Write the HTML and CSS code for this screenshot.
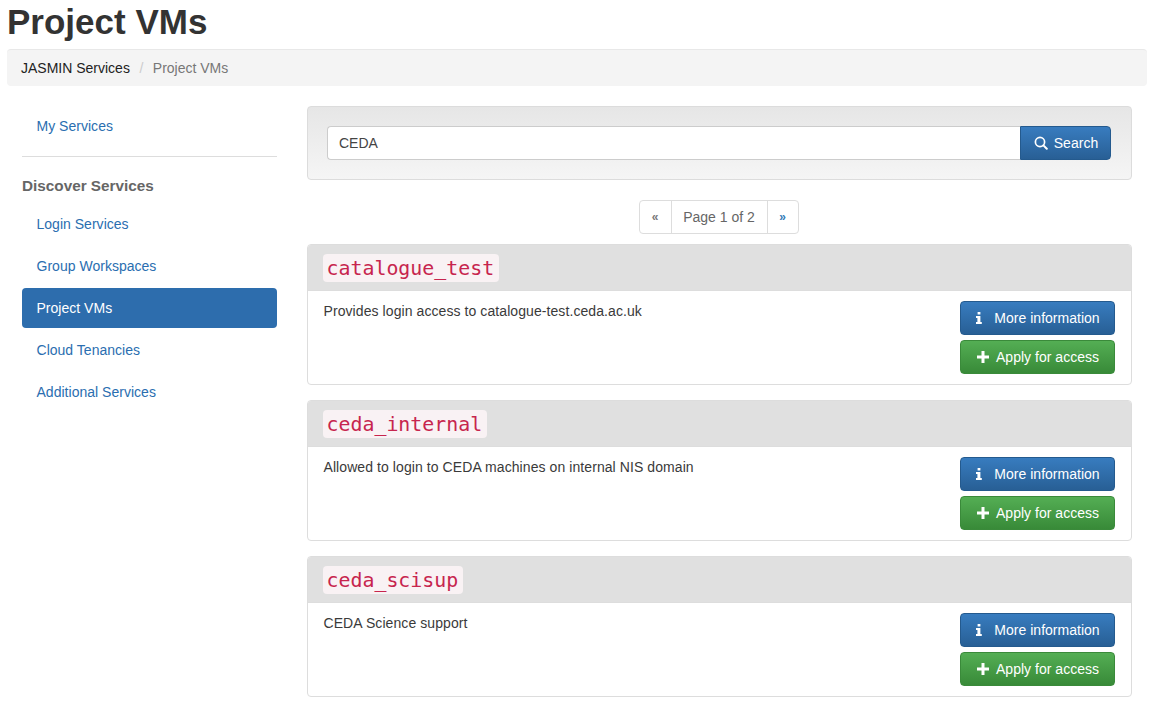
FILE: index.html
```html
<!DOCTYPE html>
<html lang="en">
<head>
<meta charset="utf-8">
<title>Project VMs</title>
<link rel="stylesheet" href="styles.css">
</head>
<body>
<div class="page">
  <h1 class="title">Project VMs</h1>
  <ol class="breadcrumb">
    <li><a href="#">JASMIN Services</a></li>
    <li class="sep">/</li>
    <li class="current">Project VMs</li>
  </ol>
  <div class="layout">
    <nav class="sidebar">
      <a class="nav-item" href="#">My Services</a>
      <hr class="divider">
      <div class="nav-heading">Discover Services</div>
      <a class="nav-item" href="#">Login Services</a>
      <a class="nav-item" href="#">Group Workspaces</a>
      <a class="nav-item active" href="#">Project VMs</a>
      <a class="nav-item" href="#">Cloud Tenancies</a>
      <a class="nav-item" href="#">Additional Services</a>
    </nav>
    <main class="main">
      <form class="well">
        <input class="search-input" type="text" value="CEDA">
        <button class="btn btn-blue btn-search" type="button">
          <svg class="icon-search" viewBox="0 0 14 14" width="14" height="14"><circle cx="6" cy="6" r="4.6" fill="none" stroke="#fff" stroke-width="1.7"/><path d="M9.4 9.4L12.8 12.8" stroke="#fff" stroke-width="2" stroke-linecap="round"/></svg>
          Search
        </button>
      </form>
      <div class="pager-row">
        <div class="pager">
          <span class="pager-cell pager-prev">«</span>
          <span class="pager-cell pager-mid">Page 1 of 2</span>
          <a class="pager-cell pager-next" href="#">»</a>
        </div>
      </div>
      <section class="panel">
        <header class="panel-head"><code class="code">catalogue_test</code></header>
        <div class="panel-body">
          <p class="desc">Provides login access to catalogue-test.ceda.ac.uk</p>
          <div class="actions">
            <a class="btn btn-blue" href="#"><svg class="icon-info" viewBox="0 0 8 12" width="8" height="12"><path d="M2.6 0h2.8v2.4H2.6zM1 3.9h4.4v6h1.4V12H1V9.9h1.4V6H1z" fill="#fff"/></svg>More information</a>
            <a class="btn btn-green" href="#"><svg class="icon-plus" viewBox="0 0 12 12" width="12" height="12"><path d="M4.5 0h3v4.5H12v3H7.500V12h-3V7.500H0v-3h4.500z" fill="#fff"/></svg>Apply for access</a>
          </div>
        </div>
      </section>
      <section class="panel">
        <header class="panel-head"><code class="code">ceda_internal</code></header>
        <div class="panel-body">
          <p class="desc">Allowed to login to CEDA machines on internal NIS domain</p>
          <div class="actions">
            <a class="btn btn-blue" href="#"><svg class="icon-info" viewBox="0 0 8 12" width="8" height="12"><path d="M2.6 0h2.8v2.4H2.6zM1 3.9h4.4v6h1.4V12H1V9.9h1.4V6H1z" fill="#fff"/></svg>More information</a>
            <a class="btn btn-green" href="#"><svg class="icon-plus" viewBox="0 0 12 12" width="12" height="12"><path d="M4.5 0h3v4.5H12v3H7.500V12h-3V7.500H0v-3h4.500z" fill="#fff"/></svg>Apply for access</a>
          </div>
        </div>
      </section>
      <section class="panel">
        <header class="panel-head"><code class="code">ceda_scisup</code></header>
        <div class="panel-body">
          <p class="desc">CEDA Science support</p>
          <div class="actions">
            <a class="btn btn-blue" href="#"><svg class="icon-info" viewBox="0 0 8 12" width="8" height="12"><path d="M2.6 0h2.8v2.4H2.6zM1 3.9h4.4v6h1.4V12H1V9.9h1.4V6H1z" fill="#fff"/></svg>More information</a>
            <a class="btn btn-green" href="#"><svg class="icon-plus" viewBox="0 0 12 12" width="12" height="12"><path d="M4.5 0h3v4.5H12v3H7.500V12h-3V7.500H0v-3h4.500z" fill="#fff"/></svg>Apply for access</a>
          </div>
        </div>
      </section>
    </main>
  </div>
</div>
</body>
</html>
```
FILE: styles.css
```css
* { box-sizing: border-box; }
html, body { margin: 0; padding: 0; background: #fff; }
body {
  font-family: "Liberation Sans", Arial, sans-serif;
  font-size: 14px;
  line-height: 20px;
  color: #333;
  overflow: hidden;
}
a { text-decoration: none; }
.page { padding: 2px 22px 0 7px; }
.title {
  margin: 0 0 7px;
  font-size: 35px;
  line-height: 40px;
  font-weight: 700;
  color: #333;
}
.breadcrumb {
  display: flex;
  gap: 9.5px;
  list-style: none;
  margin: 0 0 20px;
  padding: 8px 15px 8px 14px;
  height: 37px;
  background: #f4f4f4;
  border-top: 1px solid #e8e8e8;
  border-radius: 4px;
  color: #777;
}
.breadcrumb a { color: #222; }
.breadcrumb .sep { color: #ccc; }
.layout { display: flex; align-items: flex-start; gap: 30px; padding-left: 15px; }
.sidebar { width: 255px; flex: none; display: flex; flex-direction: column; }
.nav-item {
  display: block;
  height: 40px;
  margin-bottom: 2px;
  padding: 10px 14.5px;
  letter-spacing: 0.02px;
  color: #2a6eb0;
  border-radius: 4px;
}
.nav-item.active { background: #2d6dad; color: #fff; }
.divider { width: 100%; height: 1px; border: 0; background: #ddd; margin: 8px 0 19px; }
.nav-heading {
  font-size: 15.3px;
  line-height: 20px;
  font-weight: 700;
  color: #666;
  margin-bottom: 8px;
}
.main { width: 825px; flex: none; }
.well {
  display: flex;
  height: 74px;
  padding: 19px 20px 19px 19px;
  background: linear-gradient(to bottom, #e6e6e6, #f5f5f5);
  border: 1px solid #dcdcdc;
  border-radius: 4px;
  margin-bottom: 20px;
}
.search-input {
  flex: 1;
  min-width: 0;
  height: 34px;
  padding: 6px 11px;
  font: 14px/20px "Liberation Sans", Arial, sans-serif;
  color: #444;
  background: #fff;
  border: 1px solid #ccc;
  border-right: 0;
  border-radius: 4px 0 0 4px;
  outline: 0;
}
.btn {
  display: flex;
  align-items: center;
  justify-content: center;
  width: 155px;
  height: 34px;
  padding-left: 0;
  color: #fff;
  font: 14px/20px "Liberation Sans", Arial, sans-serif;
  letter-spacing: 0.02px;
  border-radius: 4px;
  border: 1px solid;
}
.btn-blue {
  background: linear-gradient(to bottom, #387cbf, #285f95);
  border-color: #245a8e;
}
.btn-green {
  background: linear-gradient(to bottom, #54ae54, #388a38);
  border-color: #3a8a3a;
  padding-left: 1px;
}
.btn-search {
  width: 91px;
  flex: none;
  border-radius: 0 4px 4px 0;
  padding: 0 0 0 1px;
}
.icon-search { margin-right: 6px; }
.icon-info { margin-right: 11px; }
.icon-plus { margin-right: 7px; }
.pager-row { display: flex; justify-content: center; margin: 0 1px 10px 0; padding-right: 1px; }
.pager {
  display: flex;
  height: 34px;
  border: 1px solid #ddd;
  border-radius: 4px;
  background: #fff;
}
.pager-cell {
  display: flex;
  align-items: center;
  justify-content: center;
  padding: 0 12px;
  color: #777;
}
.pager-prev { width: 31px; padding: 0; font-size: 12px; font-weight: 700; }
.pager-mid { width: 97px; padding: 0; border-left: 1px solid #ddd; border-right: 1px solid #ddd; color: #666; }
.pager-next { width: 30px; padding: 0; color: #337ab7; font-size: 12px; font-weight: 700; }
.panel {
  height: 141px;
  margin-bottom: 15px;
  border: 1px solid #ddd;
  border-radius: 4px;
  overflow: hidden;
  background: #fff;
}
.panel-head {
  display: flex;
  align-items: center;
  height: 46px;
  padding: 0 15px;
  background: #e0e0e0;
  border-bottom: 1px solid #ddd;
}
.code {
  display: block;
  padding: 3px 5px 1px 3.5px;
  height: 28px;
  font-family: "DejaVu Sans Mono", monospace;
  font-size: 19.9px;
  line-height: 24px;
  color: #c7254e;
  background: #f9f2f4;
  border-radius: 4px;
}
.panel-body {
  display: flex;
  justify-content: space-between;
  padding: 10px 16px 0 15.5px;
}
.desc { margin: 0; letter-spacing: 0.08px; color: #3a3a3a; }
.actions { display: flex; flex-direction: column; gap: 5px; }
```
